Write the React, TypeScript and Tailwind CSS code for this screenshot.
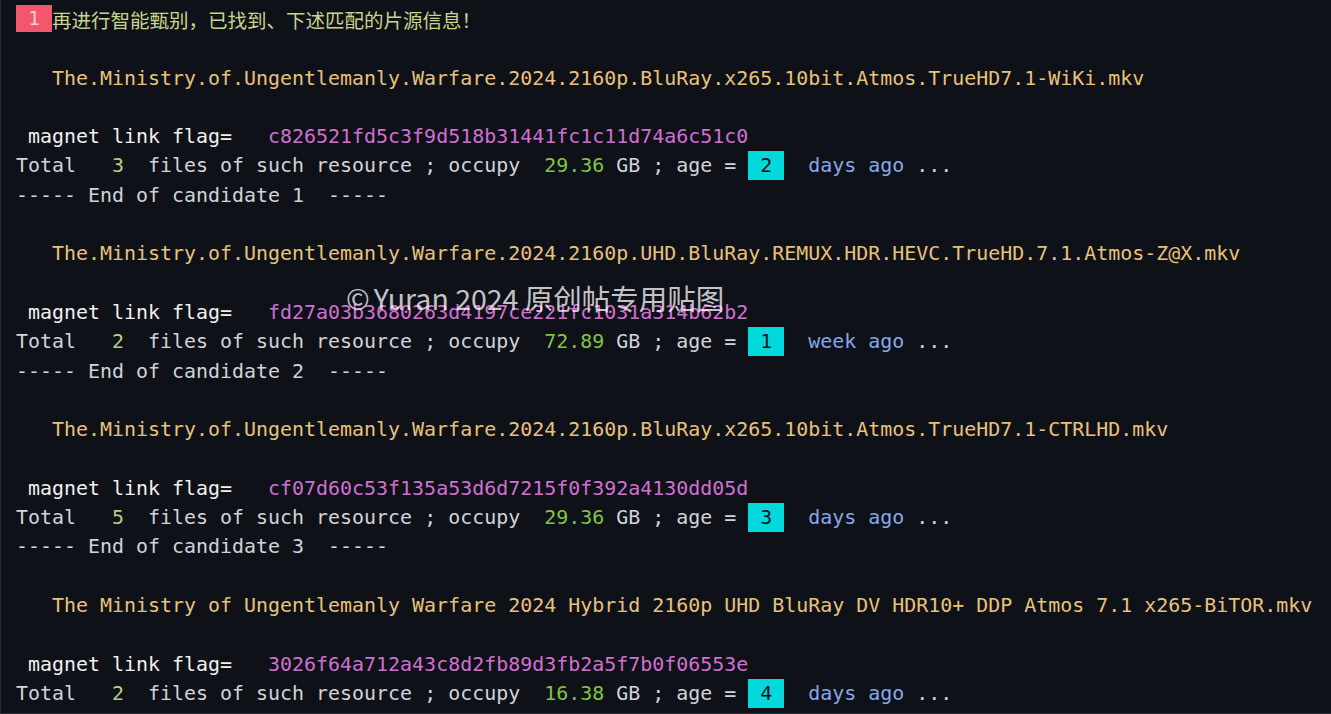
import React from 'react';

type Candidate = {
  name: string;
  hash: string;
  count: string;
  size: string;
  age: string;
  unit: string;
};

const candidates: Candidate[] = [
  {
    name: 'The.Ministry.of.Ungentlemanly.Warfare.2024.2160p.BluRay.x265.10bit.Atmos.TrueHD7.1-WiKi.mkv',
    hash: 'c826521fd5c3f9d518b31441fc1c11d74a6c51c0',
    count: '3',
    size: '29.36',
    age: '2',
    unit: 'days',
  },
  {
    name: 'The.Ministry.of.Ungentlemanly.Warfare.2024.2160p.UHD.BluRay.REMUX.HDR.HEVC.TrueHD.7.1.Atmos-Z@X.mkv',
    hash: 'fd27a03b3680263d4197ce221fc1031a314b62b2',
    count: '2',
    size: '72.89',
    age: '1',
    unit: 'week',
  },
  {
    name: 'The.Ministry.of.Ungentlemanly.Warfare.2024.2160p.BluRay.x265.10bit.Atmos.TrueHD7.1-CTRLHD.mkv',
    hash: 'cf07d60c53f135a53d6d7215f0f392a4130dd05d',
    count: '5',
    size: '29.36',
    age: '3',
    unit: 'days',
  },
  {
    name: 'The Ministry of Ungentlemanly Warfare 2024 Hybrid 2160p UHD BluRay DV HDR10+ DDP Atmos 7.1 x265-BiTOR.mkv',
    hash: '3026f64a712a43c8d2fb89d3fb2a5f7b0f06553e',
    count: '2',
    size: '16.38',
    age: '4',
    unit: 'days',
  },
];

function Line({ children }: { children?: React.ReactNode }) {
  return <div className="h-[29.3px] leading-[29.3px] whitespace-pre">{children ?? ' '}</div>;
}

export default function App() {
  return (
    <div className="relative h-[714px] w-[1331px] overflow-hidden bg-[#0f1119] border-l border-b border-[#2a2d35] pl-[15px] pt-[5px] font-['DejaVu_Sans_Mono','Liberation_Mono',monospace] text-[19.95px] text-[#d0d3d8]">
      <Line>
        <span className="inline-block h-[27px] w-[36px] bg-[#f4566d] text-center align-top leading-[27px] text-[#f9cbd3]">1</span>
        <span className="font-['Noto_Sans_CJK_SC',sans-serif] text-[19.5px] text-[#c9d48f]">
          再进行智能甄别，已找到、下述匹配的片源信息！
        </span>
      </Line>
      {candidates.map((c, i) => (
        <React.Fragment key={i}>
          <Line />
          <Line>
            <span className="text-[#e8c17a]">{'   ' + c.name}</span>
          </Line>
          <Line />
          <Line>
            <span className="text-[#f0f0f0]">{' magnet link flag=   '}</span>
            <span className="text-[#d070d0]">{c.hash}</span>
          </Line>
          <Line>
            {'Total   '}
            <span className="text-[#b8d07a]">{c.count}</span>
            {'  files of such resource ; occupy  '}
            <span className="text-[#7ec63e]">{c.size}</span>
            {' GB ; age = '}
            <span className="inline-block h-[29px] w-[36px] bg-[#00d8dc] text-center align-top leading-[29px] text-[#0f1119]">{c.age}</span>
            {'  '}
            <span className="text-[#85a8e8]">{c.unit + ' ago'}</span>
            {' ...'}
          </Line>
          <Line>{'----- End of candidate ' + (i + 1) + '  -----'}</Line>
        </React.Fragment>
      ))}
      <div className="absolute left-[345px] top-[280px] flex items-center gap-[4px] font-['Noto_Sans_CJK_SC',sans-serif] text-[28.5px] leading-[36px] text-white/75">
        <span>©</span>
        <span>Yuran 2024 原创帖专用贴图</span>
      </div>
    </div>
  );
}
